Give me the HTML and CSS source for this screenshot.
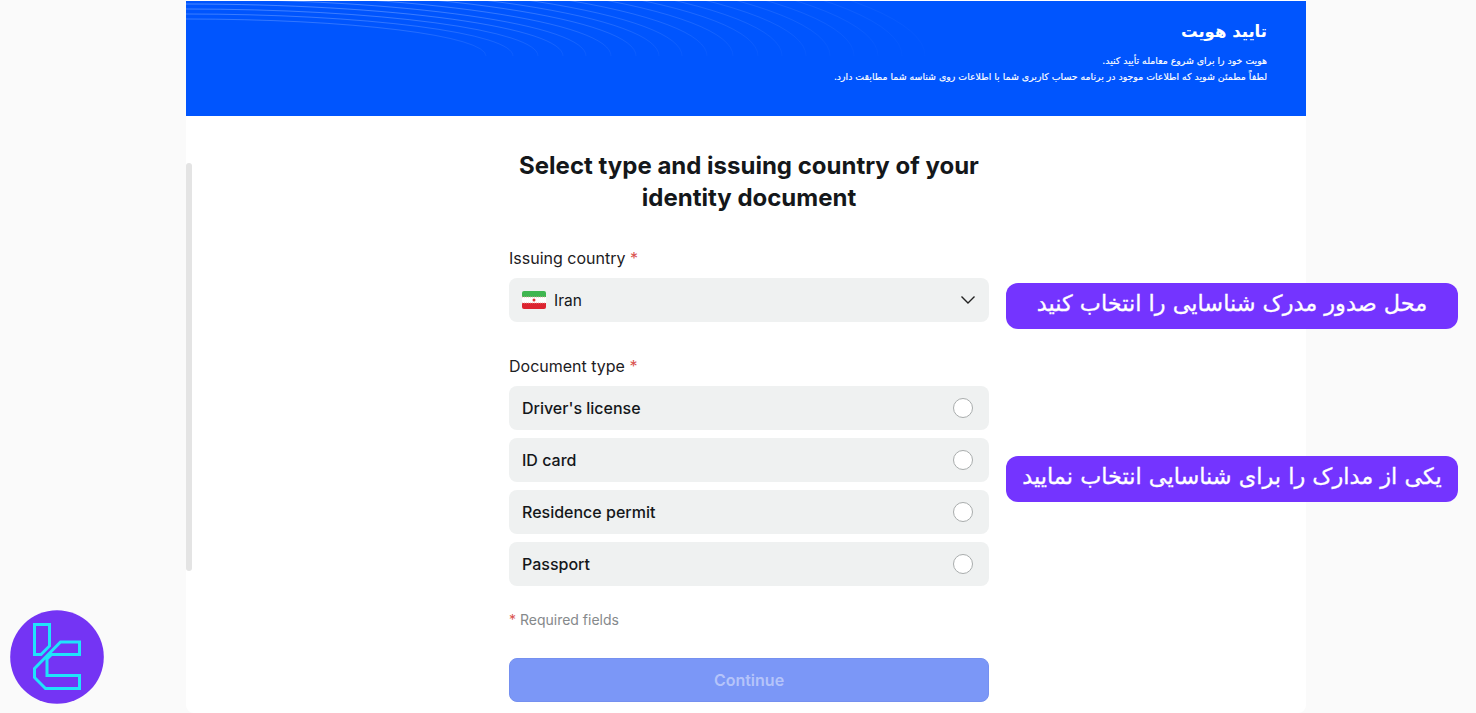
FILE: index.html
```html
<!DOCTYPE html>
<html lang="en">
<head>
    <meta charset="UTF-8">
    <meta name="viewport" content="width=device-width, initial-scale=1.0">
    <title>Identity document</title>
    <link rel="stylesheet" href="styles.css">
</head>
<body>
    <div class="card">
        <div class="scrollbar"></div>

        <div class="banner" dir="rtl">
            <svg class="banner-lines" width="1120" height="115" viewBox="0 0 1120 115" fill="none" stroke="url(#fade)">
                <defs>
                    <linearGradient id="fade" gradientUnits="userSpaceOnUse" x1="0" y1="0" x2="0" y2="56">
                        <stop offset="0" stop-color="#fff" stop-opacity="0.3"/>
                        <stop offset="0.7" stop-color="#fff" stop-opacity="0.1"/>
                        <stop offset="1" stop-color="#fff" stop-opacity="0.03"/>
                    </linearGradient>
                </defs>
                <path d="M0 18A300 37 0 0 1 300 55"/>
                <path d="M0 13A327 42 0 0 1 327 55"/>
                <path d="M0 8A352 47 0 0 1 352 55"/>
                <path d="M0 3A377 52 0 0 1 377 55"/>
                <path d="M0 -2A400 57 0 0 1 400 55" stroke-opacity="0.9"/>
                <path d="M0 -7A425 62 0 0 1 425 55" stroke-opacity="0.85"/>
                <path d="M0 -12A450 67 0 0 1 450 55" stroke-opacity="0.8"/>
                <path d="M0 -17A473 72 0 0 1 473 55" stroke-opacity="0.7"/>
                <path d="M0 -22A496 77 0 0 1 496 55" stroke-opacity="0.65"/>
                <path d="M0 -27A521 82 0 0 1 521 55" stroke-opacity="0.6"/>
                <path d="M0 -32A547 87 0 0 1 547 55" stroke-opacity="0.55"/>
                <path d="M0 -37A572 92 0 0 1 572 55" stroke-opacity="0.5"/>
                <path d="M0 -42A596 97 0 0 1 596 55" stroke-opacity="0.45"/>
                <path d="M0 -47A620 102 0 0 1 620 55" stroke-opacity="0.4"/>
                <path d="M0 -52A644 107 0 0 1 644 55" stroke-opacity="0.35"/>
                <path d="M0 -57A668 112 0 0 1 668 55" stroke-opacity="0.3"/>
                <path d="M0 -62A692 117 0 0 1 692 55" stroke-opacity="0.25"/>
                <path d="M0 -67A716 122 0 0 1 716 55" stroke-opacity="0.2"/>
                <path d="M0 -72A739 127 0 0 1 739 55" stroke-opacity="0.15"/>
            </svg>
            <h2 class="banner-title">تایید هویت</h2>
            <p class="banner-text">هویت خود را برای شروع معامله تأیید کنید.</p>
            <p class="banner-text">لطفاً مطمئن شوید که اطلاعات موجود در برنامه حساب کاربری شما با اطلاعات روی شناسه شما مطابقت دارد.</p>
        </div>

        <div class="content">
            <form class="form">
                <h1 class="form-title">Select type and issuing country of your identity document</h1>

                <div class="field-label">Issuing country <span class="req">*</span></div>
                <div class="select">
                    <svg class="flag" width="24" height="18" viewBox="0 0 24 18">
                        <rect width="24" height="6" y="0" fill="#3fb650"/>
                        <rect width="24" height="6" y="6" fill="#fff"/>
                        <rect width="24" height="6" y="12" fill="#dc2430"/>
                        <path d="M0 6h24M0 12h24" stroke="#e7a0a0" stroke-width="0.8" stroke-dasharray="1 1"/>
                        <circle cx="12" cy="9" r="1.5" fill="#d33"/>
                    </svg>
                    <span class="select-value">Iran</span>
                    <svg class="chevron" width="16" height="10" viewBox="0 0 16 10" fill="none" stroke="#222" stroke-width="1.4">
                        <path d="M1.5 1.5 8 8l6.5-6.5"/>
                    </svg>
                </div>

                <div class="field-label second">Document type <span class="req">*</span></div>
                <div class="options">
                    <label class="option">Driver's license <span class="radio"></span></label>
                    <label class="option">ID card <span class="radio"></span></label>
                    <label class="option">Residence permit <span class="radio"></span></label>
                    <label class="option">Passport <span class="radio"></span></label>
                </div>

                <div class="required-note"><span class="req">*</span> Required fields</div>

                <button class="submit-btn" type="button">Continue</button>
            </form>
        </div>
    </div>

    <div class="note note-country" dir="rtl">محل صدور مدرک شناسایی را انتخاب کنید</div>
    <div class="note note-document" dir="rtl">یکی از مدارک را برای شناسایی انتخاب نمایید</div>

    <svg class="logo" width="94" height="94" viewBox="0 0 94 94" fill="none">
        <circle cx="47" cy="47" r="46.800" fill="#7434f4"/>
        <g stroke="#1fe4fb" stroke-width="3">
            <path d="M24.500 14.500H39.500V36L31 44.500H24.500Z"/>
            <path d="M50.500 32H69.500V44.500H41.500L37 49V65.500H69.500V78.500H35.500L24.500 67.500V58.500Z"/>
        </g>
    </svg>
</body>
</html>
```

FILE: styles.css
```css
html, body {
    margin: 0;
    height: 100%;
    overflow: hidden;
}
body {
    font-family: Inter, "Liberation Sans", sans-serif;
    background-color: #fafafa;
    color: #14171a;
}
.card {
    position: relative;
    width: 1120px;
    height: 712px;
    margin-left: 186px;
    padding-top: 1px;
    background: white;
    border-radius: 0 0 8px 8px;
    overflow: hidden;
}
.scrollbar {
    position: absolute;
    left: 0;
    top: 163px;
    width: 6px;
    height: 408px;
    background: #e4e4e4;
    border-radius: 3px;
}
.banner {
    position: relative;
    height: 115px;
    padding: 19px 39px 0;
    box-sizing: border-box;
    background: #0055fe;
    color: white;
    overflow: hidden;
}
.banner-lines {
    position: absolute;
    left: 0;
    top: 0;
}
.banner-title {
    position: relative;
    margin: 0 0 9px;
    font-family: "DejaVu Sans", sans-serif;
    font-size: 16.500px;
    line-height: 24px;
    font-weight: bold;
}
.banner-text {
    position: relative;
    margin: 0;
    font-family: "DejaVu Sans", sans-serif;
    font-size: 9.400px;
    line-height: 16px;
    -webkit-text-stroke: 0.15px white;
}
.content {
    display: flex;
    justify-content: center;
    padding: 34px 0 0 6px;
}
.form {
    width: 480px;
}
.form-title {
    margin: 0 0 32px;
    font-size: 24px;
    line-height: 32px;
    font-weight: 700;
    text-align: center;
}
.field-label {
    margin-bottom: 8px;
    font-size: 16px;
    line-height: 24px;
    color: #1d2023;
}
.field-label.second {
    margin-top: 32px;
}
.req {
    color: #d9534f;
}
.select, .option {
    display: flex;
    align-items: center;
    height: 44px;
    padding: 0 13px;
    box-sizing: border-box;
    background: #eff1f1;
    border-radius: 8px;
}
.flag {
    border-radius: 2px;
}
.select-value {
    margin-left: 8px;
    font-size: 15.500px;
}
.chevron {
    margin-left: auto;
}
.options {
    display: flex;
    flex-direction: column;
    gap: 8px;
}
.option {
    justify-content: space-between;
    padding-right: 16px;
    font-size: 16px;
    font-weight: 500;
}
.radio {
    width: 18px;
    height: 18px;
    background: white;
    border: 1px solid #a9adad;
    border-radius: 50%;
}
.required-note {
    margin-top: 24px;
    font-size: 14px;
    line-height: 20px;
    color: #85898b;
}
.submit-btn {
    display: block;
    width: 100%;
    height: 44px;
    margin-top: 28px;
    padding: 0;
    border: 1px solid #7590f0;
    border-radius: 8px;
    background: #7b97f7;
    color: #b5c4fa;
    font-family: inherit;
    font-size: 16px;
    font-weight: 600;
}
.note {
    position: absolute;
    left: 1006px;
    width: 452px;
    height: 46px;
    box-sizing: border-box;
    background: #7434ff;
    border-radius: 12px;
    color: white;
    font-family: "DejaVu Sans", sans-serif;
    font-size: 22.400px;
    line-height: 41px;
    text-align: center;
    -webkit-text-stroke: 0.3px white;
}
.note-country {
    top: 283px;
}
.note-document {
    top: 456px;
}
.logo {
    position: absolute;
    left: 10px;
    top: 610px;
}
```
